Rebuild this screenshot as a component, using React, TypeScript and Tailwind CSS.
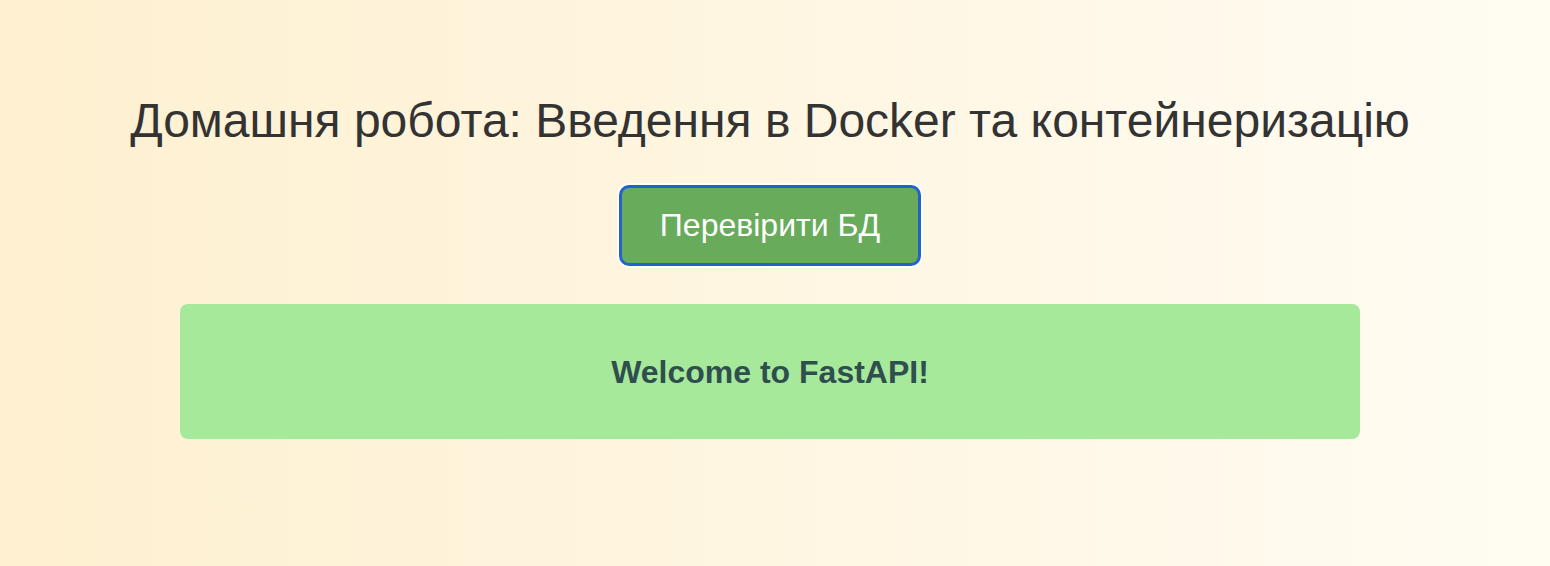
export default function App() {
  return (
    <div className="min-h-[566px] w-full bg-gradient-to-r from-[#fef0d0] to-[#fffcf3] font-['Liberation_Sans',Arial,sans-serif]">
      <div className="flex w-[1540px] flex-col items-center pt-[93px]">
        <h1 className="text-[48px] leading-[56px] text-[#333333]">
          Домашня робота: Введення в Docker та контейнеризацію
        </h1>
        <button className="mt-[36px] rounded-[10px] border-[3px] border-[#2560cf] bg-[#67ab5b] px-[38px] py-[19px] text-[32px] leading-[37px] text-white shadow-[0_0_0_2px_#ffffff]">
          Перевірити БД
        </button>
        <div className="mt-[38px] flex h-[135px] w-[1180px] items-center justify-center rounded-[8px] bg-[#a7e99a]">
          <p className="text-[32px] font-bold text-[#2f4f4f]">Welcome to FastAPI!</p>
        </div>
      </div>
    </div>
  );
}
